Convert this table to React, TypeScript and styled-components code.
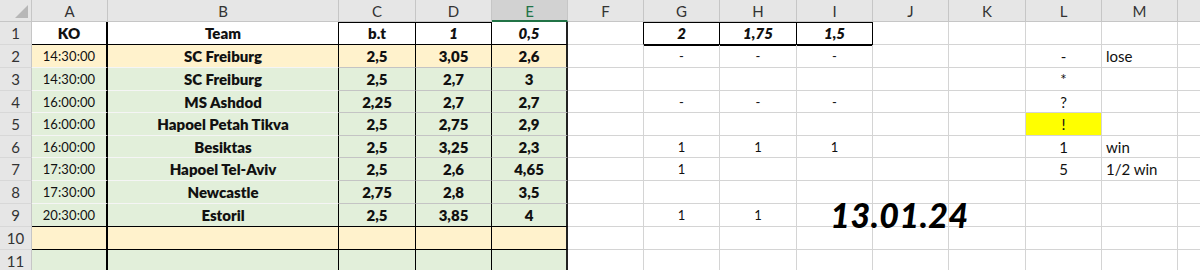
import React from "react";
import styled, { createGlobalStyle, css } from "styled-components";

const Global = createGlobalStyle`
  html, body { margin: 0; padding: 0; background: #ffffff; overflow: hidden; }
  body { font-family: Lato, "Open Sans", "Liberation Sans", sans-serif; }
`;

const COLS = [32, 76, 231, 77, 76, 76, 76, 76, 77, 76, 76, 77, 76, 76, 80];
const ROWS = [22, 23, 23, 23, 22, 23, 22, 23, 23, 23, 23, 23];
const LETTERS = ["A", "B", "C", "D", "E", "F", "G", "H", "I", "J", "K", "L", "M", ""];

const Sheet = styled.div`
  display: grid;
  grid-template-columns: ${COLS.map((c) => c + "px").join(" ")};
  grid-template-rows: ${ROWS.map((r) => r + "px").join(" ")};
  width: 1254px;
  color: #000;
`;

const Corner = styled.div`
  position: relative;
  background: #e6e6e6;
  border-right: 1px solid #c6c6c6;
  border-bottom: 1px solid #c6c6c6;
  box-sizing: border-box;
  &::after {
    content: "";
    position: absolute;
    right: 3px;
    bottom: 3px;
    width: 0;
    height: 0;
    border-left: 13px solid transparent;
    border-bottom: 13px solid #b7b7b7;
  }
`;

const ColHead = styled.div<{ $sel?: boolean }>`
  display: flex;
  align-items: center;
  justify-content: center;
  box-sizing: border-box;
  background: ${(p) => (p.$sel ? "#d2d2d2" : "#e6e6e6")};
  color: ${(p) => (p.$sel ? "#217346" : "#333")};
  border-right: 1px solid #c6c6c6;
  border-bottom: ${(p) => (p.$sel ? "2px solid #217346" : "1px solid #c6c6c6")};
  font-size: 15px;
  padding-top: 1px;
`;

const RowHead = styled.div`
  display: flex;
  align-items: center;
  justify-content: center;
  box-sizing: border-box;
  background: #e6e6e6;
  color: #333;
  border-right: 1px solid #c6c6c6;
  border-bottom: 1px solid #d8d8d8;
  font-size: 15px;
`;

type CellSpec = {
  v?: string;
  bg?: string;
  bold?: boolean;
  italic?: boolean;
  small?: boolean;
  left?: boolean;
  r?: string;
  rw?: number;
  b?: string;
  t?: string;
};

const Cell = styled.div<{
  $bg?: string;
  $bold?: boolean;
  $italic?: boolean;
  $small?: boolean;
  $left?: boolean;
  $r?: string;
  $rw?: number;
  $b?: string;
  $t?: string;
}>`
  display: flex;
  align-items: center;
  justify-content: ${(p) => (p.$left ? "flex-start" : "center")};
  padding: ${(p) => (p.$left ? "0 0 0 4px" : "0")};
  box-sizing: border-box;
  white-space: nowrap;
  background: ${(p) => p.$bg || "#ffffff"};
  border-right: ${(p) => `${p.$rw || 1}px solid ${p.$r || "#d4d4d4"}`};
  border-bottom: 1px solid ${(p) => p.$b || "#d4d4d4"};
  ${(p) =>
    p.$t &&
    css`
      box-shadow: inset 0 1px 0 ${p.$t};
    `}
  font-size: ${(p) => (p.$small ? "13px" : "15px")};
  font-weight: ${(p) => (p.$bold ? 800 : 400)};
  font-style: ${(p) => (p.$italic ? "italic" : "normal")};
  color: #111;
  letter-spacing: ${(p) => (p.$small ? "0.1px" : "0")};
`;

const DateCell = styled(Cell)`
  overflow: visible;
  padding-right: 22px;
  padding-bottom: 2px;
  position: relative;
  z-index: 2;
`;

const BigDate = styled.span`
  font-size: 34px;
  font-weight: 900;
  font-style: italic;
  color: #000;
  letter-spacing: 0.5px;
`;

const ORANGE = "#fff2cc";
const GREEN = "#e2efda";
const BLACK = "#000000";

type Row = {
  fill: string;
  a: string;
  b: string;
  c: string;
  d: string;
  e: string;
  g?: string;
  h?: string;
  i?: string;
  l?: string;
  lbg?: string;
  m?: string;
  bottom: string;
  bottomNum: string;
};

const data: Row[] = [
  { fill: ORANGE, a: "14:30:00", b: "SC Freiburg", c: "2,5", d: "3,05", e: "2,6", g: "-", h: "-", i: "-", l: "-", m: "lose", bottom: "#f5f5f5", bottomNum: "#c4c4c4" },
  { fill: GREEN, a: "14:30:00", b: "SC Freiburg", c: "2,5", d: "2,7", e: "3", l: "*", bottom: "#f5f5f5", bottomNum: "#c4c4c4" },
  { fill: GREEN, a: "16:00:00", b: "MS Ashdod", c: "2,25", d: "2,7", e: "2,7", g: "-", h: "-", i: "-", l: "?", bottom: "#f5f5f5", bottomNum: "#c4c4c4" },
  { fill: GREEN, a: "16:00:00", b: "Hapoel Petah Tikva", c: "2,5", d: "2,75", e: "2,9", l: "!", lbg: "#ffff00", bottom: "#f5f5f5", bottomNum: "#c4c4c4" },
  { fill: GREEN, a: "16:00:00", b: "Besiktas", c: "2,5", d: "3,25", e: "2,3", g: "1", h: "1", i: "1", l: "1", m: "win", bottom: "#f5f5f5", bottomNum: "#c4c4c4" },
  { fill: GREEN, a: "17:30:00", b: "Hapoel Tel-Aviv", c: "2,5", d: "2,6", e: "4,65", g: "1", l: "5", m: "1/2 win", bottom: "#f5f5f5", bottomNum: "#c4c4c4" },
  { fill: GREEN, a: "17:30:00", b: "Newcastle", c: "2,75", d: "2,8", e: "3,5", bottom: "#f5f5f5", bottomNum: "#c4c4c4" },
  { fill: GREEN, a: "20:30:00", b: "Estoril", c: "2,5", d: "3,85", e: "4", g: "1", h: "1", bottom: BLACK, bottomNum: BLACK },
  { fill: ORANGE, a: "", b: "", c: "", d: "", e: "", bottom: BLACK, bottomNum: BLACK },
  { fill: GREEN, a: "", b: "", c: "", d: "", e: "", bottom: BLACK, bottomNum: BLACK },
];

function rowCells(row: Row, idx: number): CellSpec[] {
  const cells: CellSpec[] = [
    { v: row.a, bg: row.fill, small: true, r: BLACK, rw: 2, b: row.bottom },
    { v: row.b, bg: row.fill, bold: true, r: BLACK, b: row.bottom },
    { v: row.c, bg: row.fill, bold: true, r: BLACK, b: row.bottomNum },
    { v: row.d, bg: row.fill, bold: true, r: BLACK, b: row.bottomNum },
    { v: row.e, bg: row.fill, bold: true, r: "#222", rw: 2, b: row.bottomNum },
    {},
    { v: row.g, small: true },
    { v: row.h, small: true },
    { v: row.i, small: true },
    {},
    {},
    { v: row.l, bg: row.lbg },
    { v: row.m, left: true },
    {},
  ];
  if (idx === 0) {
    cells[6].t = BLACK;
    cells[7].t = BLACK;
    cells[8].t = BLACK;
  }
  return cells;
}

const headerRow: CellSpec[] = [
  { v: "KO", bold: true, r: BLACK, rw: 2, b: BLACK },
  { v: "Team", bold: true, r: BLACK, b: BLACK },
  { v: "b.t", bold: true, r: BLACK, b: BLACK, t: BLACK },
  { v: "1", bold: true, italic: true, r: BLACK, b: BLACK, t: BLACK },
  { v: "0,5", bold: true, italic: true, r: "#222", rw: 2, b: BLACK },
  { r: BLACK },
  { v: "2", bold: true, italic: true, r: BLACK, b: BLACK, t: BLACK },
  { v: "1,75", bold: true, italic: true, r: BLACK, b: BLACK, t: BLACK },
  { v: "1,5", bold: true, italic: true, r: BLACK, b: BLACK, t: BLACK },
  {},
  {},
  {},
  {},
  {},
];

const renderCell = (c: CellSpec, key: string) => (
  <Cell
    key={key}
    $bg={c.bg}
    $bold={c.bold}
    $italic={c.italic}
    $small={c.small}
    $left={c.left}
    $r={c.r}
    $rw={c.rw}
    $b={c.b}
    $t={c.t}
  >
    {c.v}
  </Cell>
);

export default function App() {
  return (
    <>
      <Global />
      <Sheet>
        <Corner />
        {LETTERS.map((l, i) => (
          <ColHead key={"col" + i} $sel={l === "E"}>
            {l}
          </ColHead>
        ))}

        <RowHead>1</RowHead>
        {headerRow.map((c, i) => renderCell(c, "h" + i))}

        {data.map((row, ri) => {
          const cells = rowCells(row, ri);
          return (
            <React.Fragment key={"r" + ri}>
              <RowHead>{ri + 2}</RowHead>
              {cells.map((c, ci) =>
                ri === 7 && ci === 9 ? (
                  <DateCell key={"c" + ri + "-" + ci}>
                    <BigDate>13.01.24</BigDate>
                  </DateCell>
                ) : (
                  renderCell(c, "c" + ri + "-" + ci)
                )
              )}
            </React.Fragment>
          );
        })}
      </Sheet>
    </>
  );
}
